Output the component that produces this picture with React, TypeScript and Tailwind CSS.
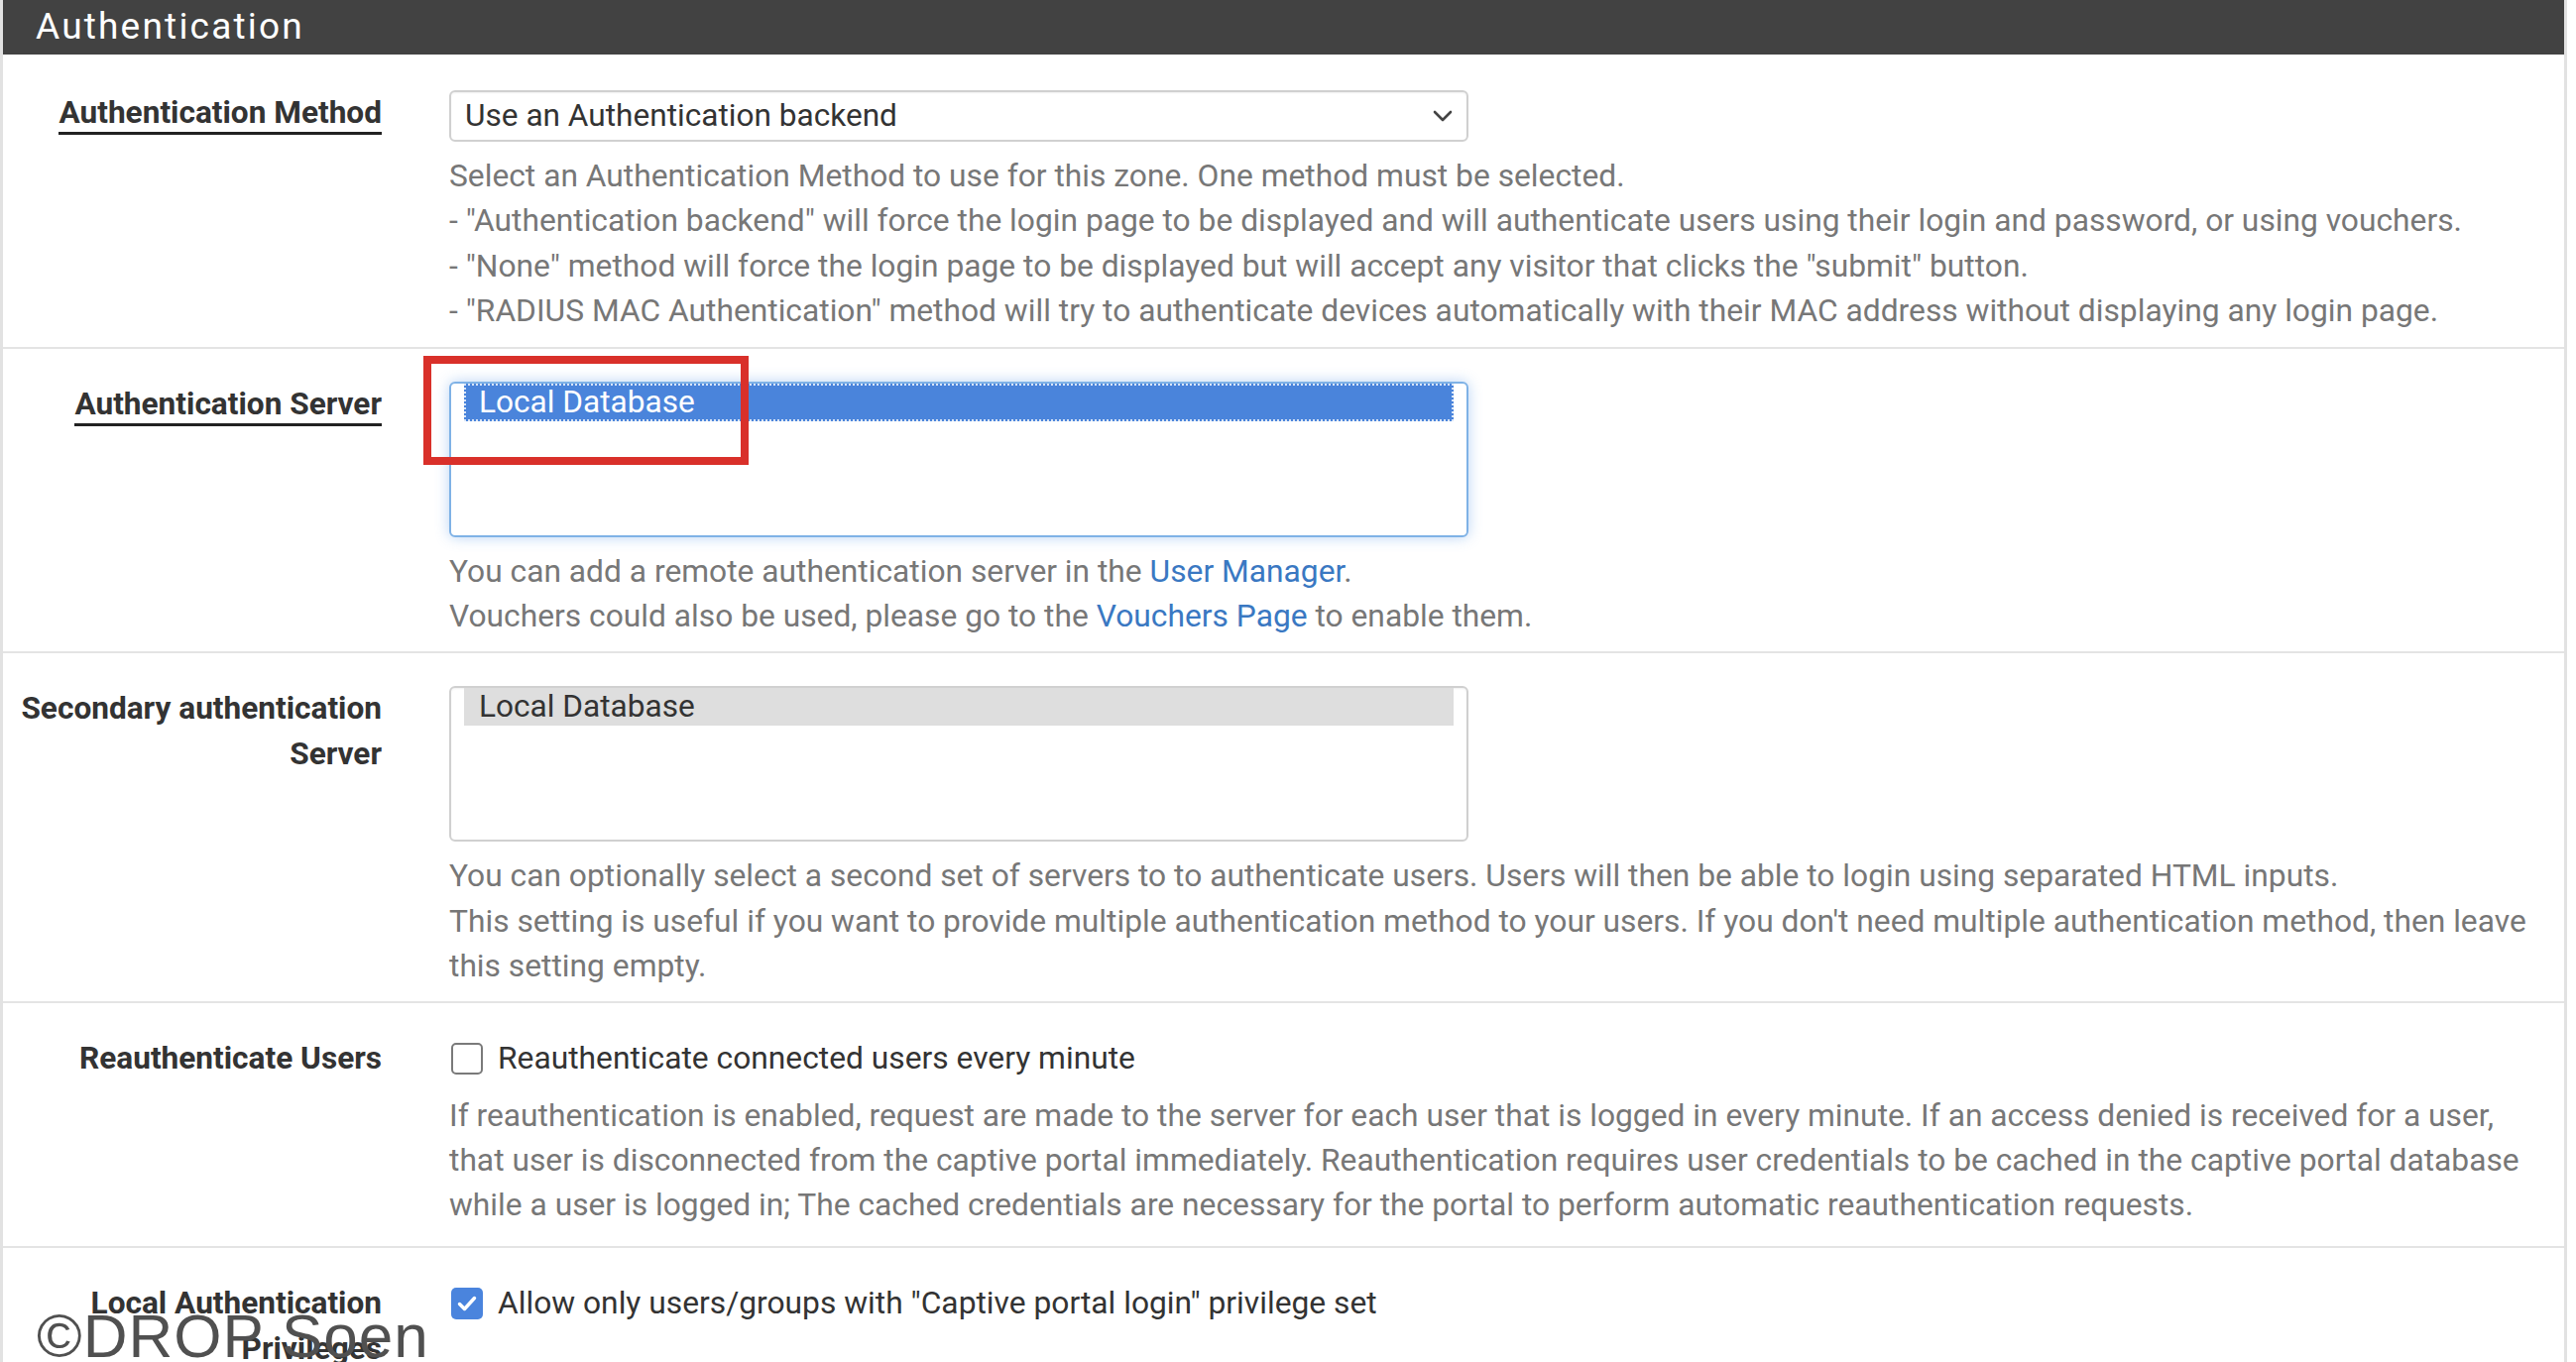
import type { ReactNode } from "react"

function Row({
  label,
  underline,
  pad = "pt-[33px] pb-[13px]",
  children,
}: {
  label: string
  underline?: boolean
  pad?: string
  children: ReactNode
}) {
  return (
    <div className={`flex border-b-2 border-[#e4e4e4] ${pad}`}>
      <div className="w-[382px] shrink-0 text-right text-[31.6px] font-bold leading-[46px] text-[#333]">
        {underline ? (
          <span className="border-b-[3px] border-[#222] pb-[1px]">{label}</span>
        ) : (
          label
        )}
      </div>
      <div className="ml-[68px] flex-1 pr-[26px]">{children}</div>
    </div>
  )
}

function Help({ children }: { children: ReactNode }) {
  return (
    <p className="mt-[12px] text-[31.75px] leading-[45.4px] text-[#777]">{children}</p>
  )
}

function Checkbox({ checked }: { checked?: boolean }) {
  if (checked) {
    return (
      <span className="ml-[2px] flex h-[32px] w-[32px] shrink-0 items-center justify-center rounded-[5px] bg-[#4a84dd]">
        <svg width="22" height="22" viewBox="0 0 22 22" fill="none">
          <path d="M3.5 11.5l5 5 10-11" stroke="white" strokeWidth="3.4" strokeLinecap="round" strokeLinejoin="round" />
        </svg>
      </span>
    )
  }
  return (
    <span className="ml-[2px] h-[32px] w-[32px] shrink-0 rounded-[5px] border-2 border-[#7a7a7a] bg-white" />
  )
}

export default function App() {
  return (
    <div className="relative min-h-screen bg-white font-[Roboto,'Liberation_Sans',sans-serif]">
      <div className="w-[2589px] border-x-[3px] border-[#e2e2e2]">
        {/* PANEL HEADING */}
        <div className="flex h-[55px] items-center bg-[#424242] pb-[3px] pl-[33px] text-[37px] leading-none tracking-[2.2px] text-white">
          Authentication
        </div>

        {/* AUTHENTICATION METHOD */}
        <Row label="Authentication Method" underline pad="pt-[36px] pb-[13px]">
          <div className="flex h-[52px] w-[1028px] items-center justify-between rounded-[6px] border-2 border-[#d0d0d0] bg-white pl-[14px] pr-[14px] text-[31.6px] text-[#333] shadow-[inset_0_1px_2px_rgba(0,0,0,0.06)]">
            <span>Use an Authentication backend</span>
            <svg width="20" height="12" viewBox="0 0 20 12" fill="none">
              <path d="M2 2l8 8 8-8" stroke="#444" strokeWidth="2.6" strokeLinecap="round" strokeLinejoin="round" />
            </svg>
          </div>
          <Help>
            Select an Authentication Method to use for this zone. One method must be selected.
            <br />
            - "Authentication backend" will force the login page to be displayed and will authenticate users using their login and password, or using vouchers.
            <br />
            - "None" method will force the login page to be displayed but will accept any visitor that clicks the "submit" button.
            <br />
            - "RADIUS MAC Authentication" method will try to authenticate devices automatically with their MAC address without displaying any login page.
          </Help>
        </Row>

        {/* AUTHENTICATION SERVER */}
        <Row label="Authentication Server" underline>
          <div className="relative w-[1028px]">
            <div className="h-[157px] rounded-[6px] border-2 border-[#7fb2e6] bg-white px-[13px] shadow-[0_0_14px_rgba(102,160,233,0.45)]">
              <div className="h-[38px] bg-[#4a84db] pl-[15px] text-[31.6px] leading-[38px] text-white outline-2 -outline-offset-2 outline-dotted outline-white/80">
                Local Database
              </div>
            </div>
            <div className="absolute -left-[26px] -top-[26px] h-[110px] w-[328px] border-[8px] border-[#d9302a]" />
          </div>
          <Help>
            You can add a remote authentication server in the{" "}
            <a className="text-[#3a78c2]">User Manager</a>.
            <br />
            Vouchers could also be used, please go to the{" "}
            <a className="text-[#3a78c2]">Vouchers Page</a> to enable them.
          </Help>
        </Row>

        {/* SECONDARY SERVER */}
        <Row label="Secondary authentication Server" pad="pt-[33px] pb-[12px]">
          <div className="h-[157px] w-[1028px] rounded-[6px] border-2 border-[#d0d0d0] bg-white px-[13px] shadow-[inset_0_1px_2px_rgba(0,0,0,0.06)]">
            <div className="h-[38px] bg-[#dedede] pl-[15px] text-[31.6px] leading-[38px] text-[#333]">
              Local Database
            </div>
          </div>
          <Help>
            You can optionally select a second set of servers to to authenticate users. Users will then be able to login using separated HTML inputs.
            <br />
            This setting is useful if you want to provide multiple authentication method to your users. If you don't need multiple authentication method, then leave this setting empty.
          </Help>
        </Row>

        {/* REAUTHENTICATE */}
        <Row label="Reauthenticate Users" pad="pt-[33px] pb-[18px]">
          <label className="flex items-center gap-[15px] text-[31.75px] leading-[46px] text-[#333]">
            <Checkbox />
            Reauthenticate connected users every minute
          </label>
          <Help>
            If reauthentication is enabled, request are made to the server for each user that is logged in every minute. If an access denied is received for a user, that user is disconnected from the captive portal immediately. Reauthentication requires user credentials to be cached in the captive portal database while a user is logged in; The cached credentials are necessary for the portal to perform automatic reauthentication requests.
          </Help>
        </Row>

        {/* LOCAL AUTH PRIVILEGES */}
        <Row label="Local Authentication Privileges">
          <label className="flex items-center gap-[15px] text-[31.75px] leading-[46px] text-[#333]">
            <Checkbox checked />
            Allow only users/groups with "Captive portal login" privilege set
          </label>
        </Row>
      </div>

      {/* watermark */}
      <div className="absolute left-[37px] top-[1317px] font-['Liberation_Sans',Arial,sans-serif] text-[62px] leading-none tracking-[1px] text-[#505050]">
        ©DROP Soen
      </div>
    </div>
  )
}
